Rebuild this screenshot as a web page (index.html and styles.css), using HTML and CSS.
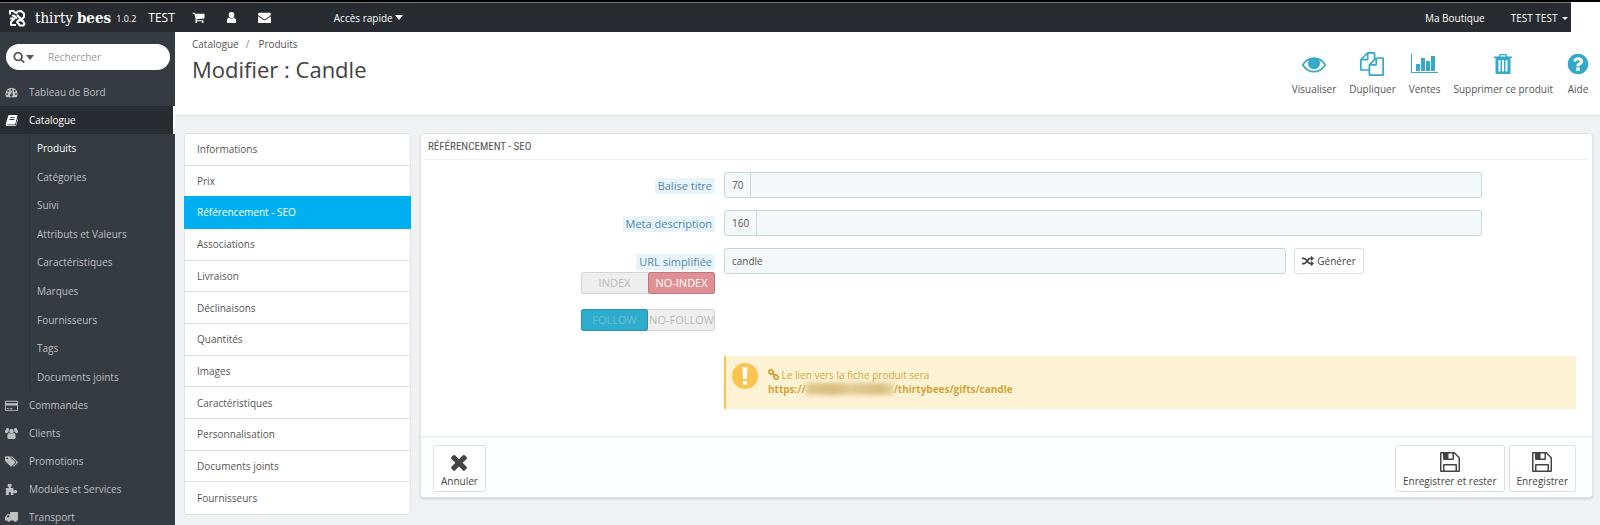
FILE: index.html
```
<!DOCTYPE html>
<html lang="fr">
<head>
    <meta charset="UTF-8">
    <meta name="viewport" content="width=device-width, initial-scale=1.0">
    <title>Modifier : Candle - thirty bees</title>
    <link rel="stylesheet" href="styles.css">
</head>
<body>
    <header class="topbar">
        <a class="logo" href="#">
            <svg class="logo-mark" viewBox="0 0 18 18">
                <path d="M2 5.500V2h3.500l2 2M4 6.500l2.500.5L9 9.500M8 5l1.500-2.500L13 2l3 2.500V8l-2.500 2.500L9 6M2 9.500h4.500L3 13v3h5M9 13l2-2 4 1 1.500 3-1 1.500H12z"/>
            </svg>
            <span class="logo-text">thirty<b>bees</b></span>
        </a>
        <span class="version">1.0.2</span>
        <a class="shop-name" href="#">TEST</a>
        <nav class="notifs">
            <a href="#" aria-label="Commandes">
                <svg class="icon" viewBox="0 0 1792 1792"><path d="M704 1536q0 52-38 90t-90 38-90-38-38-90 38-90 90-38 90 38 38 90zm896 0q0 52-38 90t-90 38-90-38-38-90 38-90 90-38 90 38 38 90zm128-1088v512q0 24-16.500 42.500t-40.500 21.500l-1044 122q13 60 13 70 0 16-24 64h920q26 0 45 19t19 45-19 45-45 19h-1024q-26 0-45-19t-19-45q0-11 8-31.500t16-36 21.500-40 15.500-29.500l-177-823h-204q-26 0-45-19t-19-45 19-45 45-19h256q16 0 28.500 6.500t19.500 15.500 13 24.500 8 26 5.500 29.500 4.500 26h1201q26 0 45 19t19 45z"/></svg>
            </a>
            <a href="#" aria-label="Clients">
                <svg class="icon" viewBox="0 0 14 14"><path d="M7 1a3 3 0 0 1 3 3.200C10 6 8.700 7.700 7 7.700S4 6 4 4.200A3 3 0 0 1 7 1zM4.400 7c.7.9 1.600 1.300 2.600 1.300S8.900 7.900 9.600 7c1.700.4 2.400 2 2.400 4.200 0 1-.7 1.800-1.700 1.800H3.700C2.700 13 2 12.200 2 11.200 2 9 2.700 7.400 4.400 7z"/></svg>
            </a>
            <a href="#" aria-label="Messages">
                <svg class="icon" viewBox="0 0 1792 1792"><path d="M1792 710v794q0 66-47 113t-113 47h-1472q-66 0-113-47t-47-113v-794q44 49 101 87 362 246 497 345 57 42 92.500 65.500t94.500 48 110 24.500h2q51 0 110-24.500t94.500-48 92.500-65.500q170-123 498-345 57-39 100-87zm0-294q0 79-49 151t-122 123q-376 261-468 325-10 7-42.500 31t-54 38.500-52 32.500-57.500 27-50 9h-2q-23 0-50-9t-57.500-27-52-32.500-54-38.500-42.500-31q-91-64-262-182.500t-205-142.500q-62-42-117-115.500t-55-136.500q0-78 41.500-130t118.500-52h1472q65 0 112.500 47t47.500 113z"/></svg>
            </a>
        </nav>
        <button class="quick" type="button">Accès rapide <span class="caret"></span></button>
        <a class="my-shop" href="#">Ma Boutique</a>
        <button class="employee" type="button">TEST TEST <span class="caret caret-small"></span></button>
    </header>

    <div class="page">
        <aside class="sidebar">
            <form class="search">
                <button class="search-btn" type="button" aria-label="Type de recherche">
                    <svg class="icon" viewBox="0 0 1792 1792"><path d="M1216 832q0-185-131.500-316.500t-316.500-131.500-316.500 131.500-131.500 316.500 131.500 316.500 316.500 131.500 316.500-131.500 131.500-316.500zm512 832q0 52-38 90t-90 38q-54 0-90-38l-343-342q-179 124-399 124-143 0-273.500-55.500t-225-150-150-225-55.500-273.500 55.500-273.500 150-225 225-150 273.500-55.500 273.500 55.500 225 150 150 225 55.500 273.500q0 220-124 399l343 343q37 37 37 90z"/></svg>
                    <span class="caret"></span>
                </button>
                <input class="search-input" type="text" placeholder="Rechercher" aria-label="Rechercher">
            </form>
            <ul class="menu">
                <li><a class="menu-link" href="#">
                    <svg class="icon" viewBox="0 0 14 12"><path fill-rule="evenodd" d="M7 1a6.500 6.500 0 0 1 6.500 6.500c0 1.300-.4 2.500-1 3.500h-11a6.500 6.500 0 0 1-1-3.500A6.500 6.500 0 0 1 7 1zM7 2a1 1 0 1 0 0 2 1 1 0 0 0 0-2zM3.500 3.300a1 1 0 1 0 0 2 1 1 0 0 0 0-2zm7 0a1 1 0 1 0 0 2 1 1 0 0 0 0-2zM2.300 6.700a1 1 0 1 0 0 2 1 1 0 0 0 0-2zm9.400 0a1 1 0 1 0 0 2 1 1 0 0 0 0-2zM7.700 4.600l-1 2.700a1.500 1.500 0 1 0 1 .2l.9-2.600z"/></svg>
                    Tableau de Bord</a></li>
                <li><a class="menu-link current" href="#">
                    <svg class="icon" viewBox="0 0 14 12"><path fill-rule="evenodd" d="M5 0h7.500c.8 0 1.100.5.900 1.200l-2.200 8c-.2.700-.6 1-1.300 1H3c-.6 0-.8.3-.6.6.1.200.3.2.6.2h8c.4 0 .6-.2.7-.5l1.800-6.500c.4.300.5.700.3 1.300l-1.600 5.600c-.2.700-.8 1.100-1.500 1.100H2.600C1.300 12 .4 10.800.9 9.500l2.500-8.300C3.700.4 4.200 0 5 0zm.7 2.500-.3.900h5l.3-.9zm-.6 2-.3.900h5l.3-.9z"/></svg>
                    Catalogue</a>
                    <ul class="submenu">
                        <li><a class="current" href="#">Produits</a></li>
                        <li><a href="#">Catégories</a></li>
                        <li><a href="#">Suivi</a></li>
                        <li><a href="#">Attributs et Valeurs</a></li>
                        <li><a href="#">Caractéristiques</a></li>
                        <li><a href="#">Marques</a></li>
                        <li><a href="#">Fournisseurs</a></li>
                        <li><a href="#">Tags</a></li>
                        <li><a href="#">Documents joints</a></li>
                    </ul>
                </li>
                <li><a class="menu-link" href="#">
                    <svg class="icon" viewBox="0 0 14 12"><path fill-rule="evenodd" d="M1.200 1h11.600c.7 0 1.200.5 1.200 1.200v8.600c0 .7-.5 1.200-1.200 1.200H1.200C.5 12 0 11.500 0 10.800V2.200C0 1.500.5 1 1.200 1zM1 2v1.500h12V2zm0 4v5h12V6zm1 3h2v1H2zm3 0h3v1H5z"/></svg>
                    Commandes</a></li>
                <li><a class="menu-link" href="#">
                    <svg class="icon" viewBox="0 0 14 12"><path d="M2.800 0a1.800 1.800 0 0 1 1.700 1.300A3 3 0 0 0 4 4.500c-.9.100-1.500.6-1.900 1.200H1.300C.5 5.700 0 5.300 0 4.500c0-1.400.2-2.300.9-2.300A1.900 1.900 0 0 1 2.800 0zm8.400 0a1.900 1.900 0 0 1 1.900 2.200c.7 0 .9.900.9 2.300 0 .8-.5 1.200-1.300 1.200h-.8A2.700 2.700 0 0 0 10 4.500a3 3 0 0 0-.5-3.200A1.800 1.800 0 0 1 11.200 0zM7 1a2.500 2.500 0 0 1 2.400 2.600A2.500 2.500 0 0 1 7 6.200a2.500 2.500 0 0 1-2.400-2.600A2.500 2.500 0 0 1 7 1zM4.500 5.500C5.900 7 8.100 7 9.500 5.500c1.500.2 2 1.800 2 4.300 0 1.400-.8 2.200-2 2.200h-5c-1.200 0-2-.8-2-2.200 0-2.500.5-4.100 2-4.300z"/></svg>
                    Clients</a></li>
                <li><a class="menu-link" href="#">
                    <svg class="icon" viewBox="0 128 1920 1536"><path d="M448 448q0-53-37.500-90.500t-90.500-37.500-90.500 37.500-37.500 90.500 37.500 90.500 90.500 37.500 90.500-37.500 37.500-90.500zm1067 576q0 53-37 90l-491 492q-39 37-91 37-53 0-90-37l-715-716q-38-37-64.500-101t-26.500-117v-416q0-52 38-90t90-38h416q53 0 117 26.500t102 64.500l715 714q37 39 37 91zm384 0q0 53-37 90l-491 492q-39 37-91 37-36 0-59-14t-53-45l470-470q37-37 37-90 0-52-37-91l-715-714q-38-38-102-64.500t-117-26.500h224q53 0 117 26.500t102 64.500l715 714q37 39 37 91z"/></svg>
                    Promotions</a></li>
                <li><a class="menu-link" href="#">
                    <svg class="icon" viewBox="0 0 14 12"><path d="M1 4.500h3V3.300A1.700 1.700 0 0 1 5 0a1.700 1.700 0 0 1 1.200 3.200V4.500H9v2.600h1.200a1.700 1.700 0 1 1 0 2.300H9V12H6.300v-1.500a1.200 1.200 0 1 0-2.200 0V12H1z"/></svg>
                    Modules et Services</a></li>
                <li><a class="menu-link" href="#">
                    <svg class="icon" viewBox="0 0 14 12"><path fill-rule="evenodd" d="M5.500 0H14v9.300h-1.300a1.800 1.800 0 0 1-3.500 0H5.800a1.800 1.800 0 0 1-3.500 0H0V5.500L2.500 2.500h3zM1.500 5.700h3V3.600H3.100z"/></svg>
                    Transport</a></li>
            </ul>
        </aside>

        <main class="content">
            <div class="page-head">
                <div>
                    <nav class="breadcrumb"><a href="#">Catalogue</a><span class="sep">/</span><a href="#">Produits</a></nav>
                    <h1 class="page-title">Modifier : Candle</h1>
                </div>
                <nav class="toolbar">
                    <a class="tool" href="#">
                        <svg class="icon" viewBox="0 0 1792 1792"><path d="M1664 960q-152-236-381-353 61 104 61 225 0 185-131.500 316.500t-316.500 131.500-316.500-131.500-131.500-316.500q0-121 61-225-229 117-381 353 133 205 333.500 326.500t434.500 121.500 434.500-121.500 333.500-326.500zm-720-384q0-20-14-34t-34-14q-125 0-214.500 89.500t-89.500 214.500q0 20 14 34t34 14 34-14 14-34q0-86 61-147t147-61q20 0 34-14t14-34zm848 384q0 34-20 69-140 230-376.500 368.500t-499.500 138.500-499.500-139-376.500-368q-20-35-20-69t20-69q140-229 376.500-368t499.500-139 499.500 139 376.500 368q20 35 20 69z"/><circle cx="896" cy="832" r="400"/></svg>
                        Visualiser</a>
                    <a class="tool" href="#">
                        <svg class="icon" viewBox="0 0 1792 1792"><path d="M1696 384q40 0 68 28t28 68v1216q0 40-28 68t-68 28h-960q-40 0-68-28t-28-68v-288h-544q-40 0-68-28t-28-68v-672q0-40 20-88t48-76l408-408q28-28 76-48t88-20h416q40 0 68 28t28 68v328q68-40 128-40h416zm-544 213l-299 299h299v-299zm-640-384l-299 299h299v-299zm196 647l316-316v-416h-384v416q0 40-28 68t-68 28h-416v640h512v-256q0-40 20-88t48-76zm956 804v-1152h-384v416q0 40-28 68t-68 28h-416v640h896z"/></svg>
                        Dupliquer</a>
                    <a class="tool" href="#">
                        <svg class="icon icon-wide" viewBox="0 0 27 24"><path d="M0 2h1v18h26v1H0zM5 12h4v7H5zM10 6h4v13h-4zM15 9h4v10h-4zM20 4h4v15h-4z"/></svg>
                        Ventes</a>
                    <a class="tool" href="#">
                        <svg class="icon" viewBox="0 0 24 24"><path fill-rule="evenodd" d="M9 2h6l1.500 2.500H21V6h-1.500v14.500c0 1-.7 1.500-1.500 1.500H6c-.8 0-1.500-.5-1.500-1.500V6H3V4.500h4.500zm.8 1.300-.7 1.200h5.800l-.7-1.200zM7.500 8v11.500h2V8zm3.500 0v11.500h2V8zm3.500 0v11.500h2V8z"/></svg>
                        Supprimer ce produit</a>
                    <a class="tool" href="#">
                        <svg class="icon" viewBox="0 0 1792 1792"><path d="M1024 1376v-192q0-14-9-23t-23-9h-192q-14 0-23 9t-9 23v192q0 14 9 23t23 9h192q14 0 23-9t9-23zm256-672q0-88-55.500-163t-138.500-116-170-41q-243 0-371 213-15 24 8 42l132 100q7 6 19 6 16 0 25-12 53-68 86-92 34-24 86-24 48 0 85.500 26t37.500 59q0 38-20 61t-68 45q-63 28-115.500 86.500t-52.500 125.500v36q0 14 9 23t23 9h192q14 0 23-9t9-23q0-19 21.500-49.500t54.500-49.500q32-18 49-28.500t46-35 44.500-48 28-60.500 12.500-81zm384 192q0 209-103 385.500t-279.500 279.500-385.500 103-385.500-103-279.500-279.500-103-385.500 103-385.500 279.500-279.500 385.500-103 385.500 103 279.500 279.500 103 385.500z"/></svg>
                        Aide</a>
                </nav>
            </div>

            <div class="product">
                <nav class="tabs">
                    <a href="#">Informations</a>
                    <a href="#">Prix</a>
                    <a class="active" href="#">Référencement - SEO</a>
                    <a href="#">Associations</a>
                    <a href="#">Livraison</a>
                    <a href="#">Déclinaisons</a>
                    <a href="#">Quantités</a>
                    <a href="#">Images</a>
                    <a href="#">Caractéristiques</a>
                    <a href="#">Personnalisation</a>
                    <a href="#">Documents joints</a>
                    <a href="#">Fournisseurs</a>
                </nav>

                <form class="panel">
                    <h2 class="panel-heading">RÉFÉRENCEMENT - SEO</h2>
                    <div class="form-row">
                        <div class="label-col"><label for="meta-title">Balise titre</label></div>
                        <div class="input-group">
                            <span class="counter">70</span>
                            <input id="meta-title" type="text">
                        </div>
                    </div>
                    <div class="form-row">
                        <div class="label-col"><label for="meta-description">Meta description</label></div>
                        <div class="input-group">
                            <span class="counter">160</span>
                            <input id="meta-description" type="text">
                        </div>
                    </div>
                    <div class="form-row">
                        <div class="label-col">
                            <label for="link-rewrite">URL simplifiée</label>
                            <div class="switch">
                                <input type="radio" name="index" id="index-on"><label for="index-on">INDEX</label>
                                <input type="radio" name="index" id="index-off" checked><label class="off" for="index-off">NO-INDEX</label>
                            </div>
                            <div class="switch">
                                <input type="radio" name="follow" id="follow-on" checked><label class="on" for="follow-on">FOLLOW</label>
                                <input type="radio" name="follow" id="follow-off"><label for="follow-off">NO-FOLLOW</label>
                            </div>
                        </div>
                        <div class="slug">
                            <input class="slug-input" id="link-rewrite" type="text" value="candle">
                            <button class="btn" type="button">
                                <svg class="icon" viewBox="0 0 14 12"><path fill="none" stroke="currentColor" stroke-width="2" d="M0 3h2c4 0 4 6 8 6h1M0 9h2c4 0 4-6 8-6h1"/><path d="M10.500 0 14 3l-3.500 3zM10.500 6 14 9l-3.500 3z"/></svg>
                                Générer</button>
                        </div>
                    </div>
                    <div class="form-row">
                        <div class="alert">
                            <svg class="alert-icon" viewBox="0 0 26 26"><circle cx="13" cy="13" r="13" fill="#fbc44e"/><path fill="#fff" d="M10.500 4h5l-.6 12h-3.800zM11 18h4v4h-4z"/></svg>
                            <p>
                                <svg class="icon icon-line" viewBox="0 0 12 12"><rect x="1" y="1" width="5" height="4" rx="2" transform="rotate(45 3 3)"/><rect x="6" y="7" width="5" height="4" rx="2" transform="rotate(45 9 9)"/><path d="M4 4l4 4"/></svg>
                                Le lien vers la fiche produit sera<br>
                                <b>https://<span class="masked"></span>/thirtybees/gifts/candle</b>
                            </p>
                        </div>
                    </div>
                    <div class="panel-footer">
                        <button class="btn btn-big" type="button">
                            <svg class="icon" viewBox="0 0 1792 1792"><path d="M1490 1322q0 40-28 68l-136 136q-28 28-68 28t-68-28l-294-294-294 294q-28 28-68 28t-68-28l-136-136q-28-28-28-68t28-68l294-294-294-294q-28-28-28-68t28-68l136-136q28-28 68-28t68 28l294 294 294-294q28-28 68-28t68 28l136 136q28 28 28 68t-28 68l-294 294 294 294q28 28 28 68z"/></svg>
                            Annuler</button>
                        <button class="btn btn-big save" type="submit">
                            <svg class="icon" viewBox="0 0 24 24"><path fill-rule="evenodd" d="M3 2h13.500L22 7.500V21a1 1 0 0 1-1 1H3a1 1 0 0 1-1-1V3a1 1 0 0 1 1-1zm.5 1.500v17H5V15a1 1 0 0 1 1-1h12a1 1 0 0 1 1 1v5.500h1.500V8L16 3.500V9a1 1 0 0 1-1 1H6a1 1 0 0 1-1-1V3.500zm7 0v5h4v-5zm-4 12v5h11v-5z"/></svg>
                            Enregistrer et rester</button>
                        <button class="btn btn-big" type="submit">
                            <svg class="icon" viewBox="0 0 24 24"><path fill-rule="evenodd" d="M3 2h13.500L22 7.500V21a1 1 0 0 1-1 1H3a1 1 0 0 1-1-1V3a1 1 0 0 1 1-1zm.5 1.500v17H5V15a1 1 0 0 1 1-1h12a1 1 0 0 1 1 1v5.500h1.500V8L16 3.500V9a1 1 0 0 1-1 1H6a1 1 0 0 1-1-1V3.500zm7 0v5h4v-5zm-4 12v5h11v-5z"/></svg>
                            Enregistrer</button>
                    </div>
                </form>
            </div>
        </main>
    </div>
</body>
</html>
```
FILE: styles.css
```
* {
    box-sizing: border-box;
}

body {
    margin: 0;
    height: 100vh;
    overflow: hidden;
    border-top: 2px solid #000;
    background-color: #fff;
    color: #555;
    font-family: "Open Sans", sans-serif;
    font-size: 10px;
    line-height: 14px;
}

a {
    color: inherit;
    text-decoration: none;
}

ul {
    margin: 0;
    padding: 0;
    list-style: none;
}

button,
input {
    font: inherit;
    color: inherit;
}

button {
    padding: 0;
    border: 0;
    background: none;
    cursor: pointer;
}

.icon {
    width: 13px;
    height: 13px;
    fill: currentColor;
}

.icon-line {
    fill: none;
    stroke: currentColor;
    stroke-width: 2;
}

.caret {
    display: inline-block;
    border: 4px solid transparent;
    border-top: 5px solid;
    border-bottom: 0;
    vertical-align: 2px;
}

.caret-small {
    border-width: 3px 3px 0;
    margin-left: 2px;
}

/* barre du haut */
.topbar {
    display: flex;
    align-items: center;
    height: 30px;
    margin-right: 29px;
    padding: 0 3px 0 8px;
    border-top: 1px solid #777;
    background-color: #282b30;
    color: #fff;
}

.logo {
    display: flex;
    align-items: center;
    gap: 9px;
}

.logo-mark {
    width: 18px;
    height: 18px;
    fill: none;
    stroke: #fff;
    stroke-width: 2;
    stroke-linejoin: round;
}

.logo-text {
    font-family: "DejaVu Serif Condensed", "DejaVu Serif", serif;
    font-size: 15px;
    line-height: 24px;
}

.logo-text b {
    margin-left: 4px;
}

.version {
    margin: 3px 0 0 5px;
    font-size: 9px;
}

.shop-name {
    margin-left: 12px;
    font-size: 12px;
}

.notifs {
    display: flex;
    gap: 20px;
    margin-left: 17px;
}

.notifs .icon {
    display: block;
}

.quick {
    margin-left: 63px;
}

.my-shop {
    margin-left: auto;
}

.employee {
    margin-left: 26px;
}

.page {
    display: flex;
    height: calc(100vh - 32px);
}

/* menu */
.sidebar {
    flex: none;
    width: 175px;
    padding-top: 12px;
    background-color: #363a41;
    color: #bebfc1;
}

.search {
    display: flex;
    align-items: center;
    height: 26px;
    margin: 0 5px 8px 6px;
    padding: 0 7px;
    border-radius: 13px;
    background-color: #fff;
}

.search-btn {
    display: flex;
    align-items: center;
    gap: 1px;
    color: #555;
}

.search-btn .icon {
    width: 12px;
    height: 12px;
}

.search-input {
    flex: 1;
    min-width: 0;
    margin-left: 14px;
    padding: 0;
    border: 0;
    outline: 0;
}

.search-input::placeholder {
    color: #999;
}

.menu-link {
    display: flex;
    align-items: center;
    gap: 11px;
    height: 28px;
    padding-left: 5px;
}

.menu-link.current {
    margin-right: 2px;
    background-color: #282b30;
    box-shadow: 2px 0 #fff;
}

.menu .current {
    color: #fff;
    font-weight: 500;
}

.submenu {
    display: grid;
    grid-auto-rows: 1fr;
    align-items: center;
    height: 257px;
    margin-left: 29px;
    padding-left: 7px;
    border-left: 1px solid #2f3338;
}

/* contenu */
.content {
    flex: 1;
    min-width: 0;
    background-color: #eff1f2;
}

.page-head {
    display: flex;
    justify-content: space-between;
    height: 84px;
    padding: 5px 10px 0 17px;
    border-bottom: 1px solid #dde0e2;
    background-color: #fff;
}

.breadcrumb .sep {
    margin: 0 9px 0 7px;
    color: #888;
}

.page-title {
    margin: 3px 0 0;
    color: #414141;
    font-size: 22px;
    font-weight: 400;
    line-height: 30px;
}

.toolbar {
    display: flex;
    gap: 13px;
    padding-top: 15px;
}

.tool {
    display: flex;
    flex-direction: column;
    align-items: center;
    gap: 6px;
}

.tool .icon {
    width: 24px;
    height: 24px;
    color: #35a9c9;
}

.tool .icon-wide {
    width: 27px;
}

.product {
    display: flex;
    align-items: flex-start;
    gap: 9px;
    padding: 17px 7px 0 9px;
}

.tabs {
    display: grid;
    grid-auto-rows: 1fr;
    flex: none;
    width: 227px;
    height: 382px;
    border: 1px solid #dfe2e4;
    border-radius: 3px 3px 0 0;
    background-color: #fff;
}

.tabs a {
    display: flex;
    align-items: center;
    padding-left: 12px;
    border-bottom: 1px solid #dcdfe1;
}

.tabs a:last-child {
    border-bottom: 0;
}

.tabs .active {
    margin: -1px -1px 0;
    padding-left: 13px;
    border-color: #00aff0;
    background-color: #00aff0;
    color: #fff;
}

.panel {
    flex: 1;
    min-width: 0;
    border: 1px solid #e2e5e7;
    border-radius: 4px;
    background-color: #fff;
    box-shadow: 0 1px 2px rgba(0, 0, 0, 0.15);
}

.panel-heading {
    margin: 0 4px 12px;
    padding: 0 3px;
    border-bottom: 1px solid #eceef0;
    color: #555;
    font-family: "Ubuntu Condensed", "Liberation Sans Narrow", "Roboto Condensed", sans-serif;
    font-size: 11px;
    font-weight: 400;
    line-height: 25px;
}

.form-row {
    display: grid;
    grid-template-columns: 1fr 3fr;
    column-gap: 9px;
    margin-bottom: 12px;
    padding: 0 16px 0 10px;
}

.label-col {
    display: flex;
    flex-direction: column;
    align-items: flex-end;
    padding-top: 6px;
}

.label-col > label {
    padding: 0 3px;
    border-radius: 2px;
    background-color: #e8f4fb;
    color: #5486ab;
    font-size: 11px;
    line-height: 16px;
}

.input-group {
    display: flex;
    width: 89%;
    height: 26px;
    border: 1px solid #c7d6db;
    border-radius: 3px;
    background-color: #f5f8f9;
}

.counter {
    padding: 5px 7px;
    border-right: 1px solid #c7d6db;
}

.input-group input {
    flex: 1;
    min-width: 0;
    padding: 0 7px;
    border: 0;
    background: none;
}

.slug {
    display: flex;
    align-items: flex-start;
    gap: 8px;
}

.slug-input {
    width: 66%;
    height: 26px;
    padding: 0 7px;
    border: 1px solid #c7d6db;
    border-radius: 3px;
    background-color: #f5f8f9;
}

.btn {
    display: flex;
    align-items: center;
    gap: 3px;
    height: 26px;
    padding: 0 7px;
    border: 1px solid #dedede;
    border-radius: 3px;
    background-color: #fff;
    color: #444;
}

.btn .icon {
    width: 12px;
    height: 12px;
}

.switch {
    display: grid;
    grid-template-columns: 1fr 1fr;
    position: relative;
    width: 134px;
    height: 22px;
    margin: 2px 0 13px;
    border-radius: 3px;
    background-color: #eee;
    box-shadow: inset 0 0 0 1px #d4d4d4;
    color: #bbb;
    font-size: 11px;
    line-height: 22px;
    text-align: center;
    white-space: nowrap;
}

.switch input {
    position: absolute;
    opacity: 0;
}

.switch .off,
.switch .on {
    border-radius: 3px;
    box-shadow: inset 0 0 0 1px rgba(0, 0, 0, 0.15);
}

.switch .off {
    background-color: #e08f95;
    color: #fff;
    font-weight: 500;
}

.switch .on {
    background-color: #2eacce;
    color: #6cbdd0;
}

.alert {
    display: flex;
    grid-column: 2;
    gap: 10px;
    height: 53px;
    padding: 7px 6px;
    border-left: 2px solid #fbc44e;
    background-color: #fef2d4;
    color: #d2a63c;
}

.alert-icon {
    width: 26px;
    height: 26px;
}

.alert p {
    margin: 5px 0 0;
}

.alert p .icon {
    width: 11px;
    height: 11px;
    vertical-align: -1px;
}

.masked {
    display: inline-block;
    width: 88px;
    height: 12px;
    background: linear-gradient(90deg, #e0c78f, #d9bb7c 30%, #e2cb98 50%, #d9bd80 85%, #ead7ab);
    filter: blur(2px);
    vertical-align: -2px;
}

.panel-footer {
    display: flex;
    gap: 4px;
    margin-top: 27px;
    padding: 8px 16px 5px 12px;
    border-top: 1px solid #e6e9eb;
    border-radius: 0 0 4px 4px;
    background-color: #fcfdfe;
}

.btn-big {
    flex-direction: column;
    gap: 0;
    height: 47px;
    padding: 4px 7px 0;
}

.btn-big .icon {
    width: 24px;
    height: 24px;
}

.save {
    margin-left: auto;
}
```
